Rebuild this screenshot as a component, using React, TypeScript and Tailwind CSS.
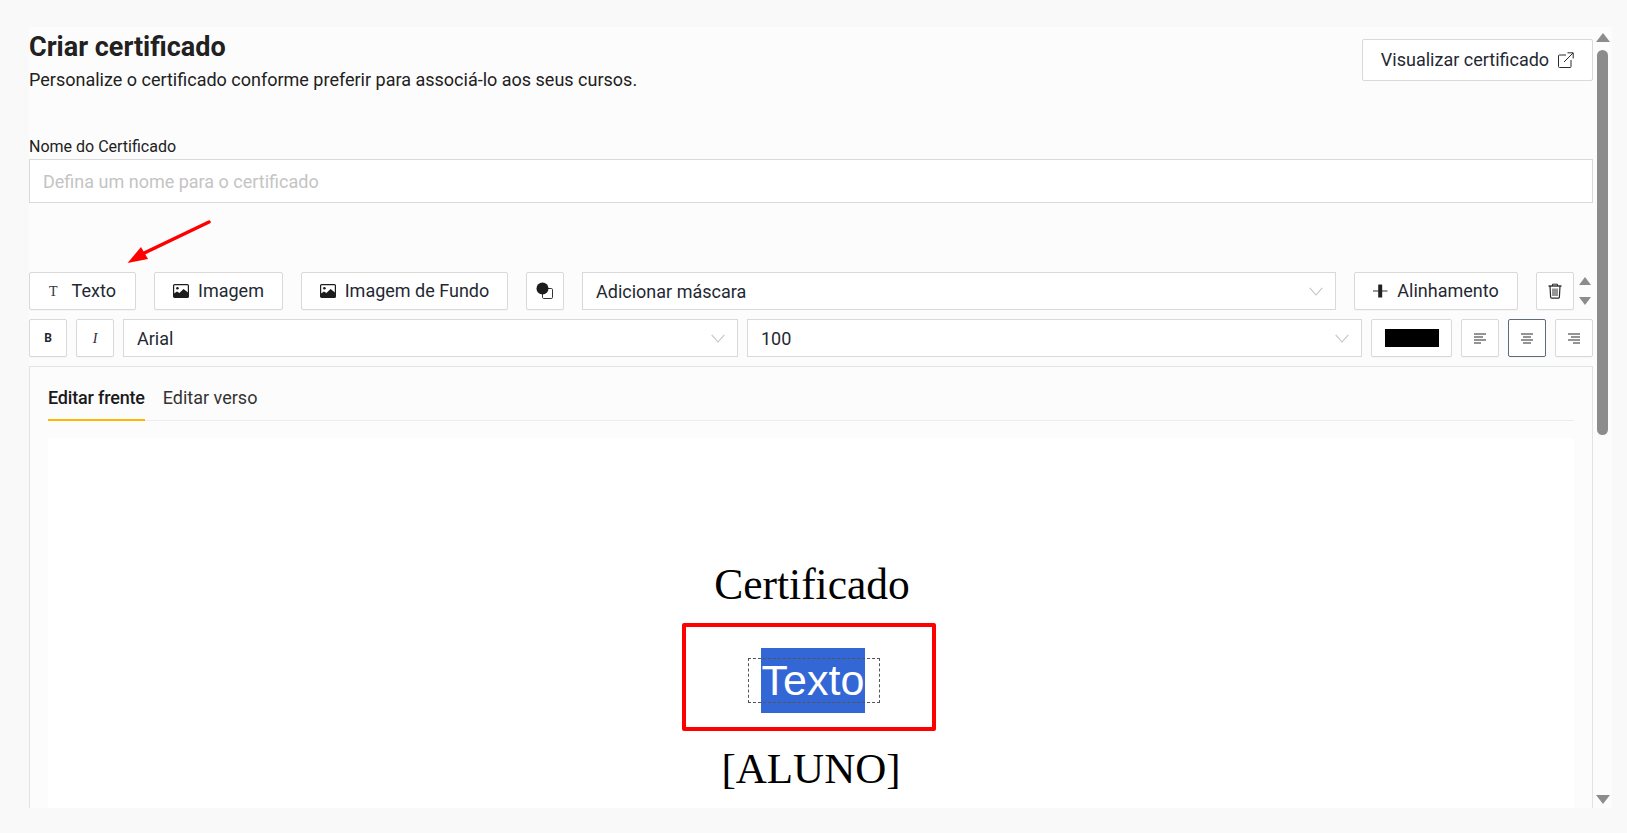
import React from 'react';

const ToolButton = ({ className = '', children }: { className?: string; children: React.ReactNode }) => (
  <button className={`flex h-[38px] items-center justify-center rounded-[2px] border border-[#d9d9d9] bg-white text-[18px] text-[#1f2933] shadow-[0_1px_1px_rgba(0,0,0,0.03)] ${className}`}>
    {children}
  </button>
);

const Chevron = () => (
  <svg width="14" height="9" viewBox="0 0 14 9" fill="none" className="shrink-0">
    <path d="M0.7 0.8 7 8 13.3 0.8" stroke="#c4c4c4" strokeWidth="1.1" />
  </svg>
);

const SelectBox = ({ value, className = '' }: { value: string; className?: string }) => (
  <div className={`flex h-[38px] items-center justify-between border border-[#d9d9d9] bg-white pl-[13px] pr-[12px] text-[18px] text-[#1f2933] ${className}`}>
    <span>{value}</span>
    <Chevron />
  </div>
);

const ImageIcon = () => (
  <svg width="16" height="14" viewBox="0 0 16 14" className="mt-[2px] shrink-0">
    <rect x="0.6" y="0.6" width="14.8" height="12.8" rx="1" fill="#fff" stroke="#1c1c1c" strokeWidth="1.2" />
    <circle cx="4.4" cy="4.2" r="1.3" fill="#1c1c1c" />
    <path d="M1 13 V9.6 L4 7.4 6.4 9 10.6 5 15 8.6 V13 Z" fill="#1c1c1c" />
  </svg>
);

const AlignIcon = ({ kind }: { kind: 'left' | 'center' | 'right' }) => {
  const lines = {
    left: [[0, 12], [0, 9], [0, 12], [0, 7]],
    center: [[0, 12], [2, 10], [0, 12], [2, 10]],
    right: [[0, 12], [3, 12], [0, 12], [5, 12]],
  }[kind];
  return (
    <svg width="12" height="11" viewBox="0 0 12 11" fill="none">
      {lines.map(([a, b], i) => (
        <path key={i} d={`M${a} ${1 + i * 3}H${b}`} stroke="#2b2b2b" strokeWidth="1" />
      ))}
    </svg>
  );
};

export default function App() {
  return (
    <div className="relative h-[833px] overflow-hidden bg-[#f9f9f9] pl-[29px] pt-[27px] font-['Roboto',sans-serif]">
      <div className="flex h-[781px] w-[1583px] bg-[#fcfcfc]">
        {/* Main column */}
        <div className="flex w-[1564px] shrink-0 flex-col">
          <div className="flex h-[112px] items-start justify-between">
            <div>
              <h1 className="mt-[4px] text-[27px] font-bold leading-[32px] text-[#212121]">Criar certificado</h1>
              <p className="mt-[5px] text-[18px] leading-[24px] text-[#212121]">
                Personalize o certificado conforme preferir para associá-lo aos seus cursos.
              </p>
            </div>
            <button className="mt-[12px] flex h-[42px] w-[231px] items-center justify-center gap-[9px] rounded-[2px] border border-[#d9d9d9] bg-white pb-[2px] text-[18px] text-[#1f2933]">
              Visualizar certificado
              <svg width="16" height="16" viewBox="0 0 16 16" fill="none" stroke="#2b2b2b" strokeWidth="1" className="mt-[2px]">
                <path d="M8 3H1.5a1 1 0 0 0-1 1v10.5a1 1 0 0 0 1 1H12a1 1 0 0 0 1-1V8" />
                <path d="M6 10 15 1M9.5 0.8H15.2V6.5" />
              </svg>
            </button>
          </div>

          <label className="h-[20px] text-[16px] leading-[16px] text-[#212121]">Nome do Certificado</label>
          <div className="flex h-[44px] items-center border border-[#d9d9d9] bg-white pl-[13px] pt-[1px] text-[18px] text-[#c4c4c4]">
            Defina um nome para o certificado
          </div>

          {/* Toolbar row 1 */}
          <div className="mt-[69px] flex h-[38px] items-center gap-[18px]">
            <ToolButton className="w-[107px] gap-[14px] pb-[2px]">
              <span className="mt-[2px] font-['Liberation_Serif',serif] text-[14px] text-[#333]">T</span>
              Texto
            </ToolButton>
            <ToolButton className="w-[129px] gap-[9px] pb-[2px]">
              <ImageIcon />
              Imagem
            </ToolButton>
            <ToolButton className="w-[207px] gap-[9px] pb-[2px]">
              <ImageIcon />
              Imagem de Fundo
            </ToolButton>
            <ToolButton className="w-[38px]">
              <svg width="18" height="18" viewBox="0 0 18 18" fill="none">
                <rect x="6.5" y="6.5" width="10" height="10" rx="1.2" stroke="#333" strokeWidth="1" />
                <circle cx="6.5" cy="6.5" r="6" fill="#1c1c1c" />
              </svg>
            </ToolButton>
            <SelectBox value="Adicionar máscara" className="flex-1" />
            <ToolButton className="w-[164px] gap-[9px] pb-[2px]">
              <svg width="15" height="14" viewBox="0 0 15 14" className="mt-[2px]">
                <path d="M0 7H14.5" stroke="#555" strokeWidth="1.2" />
                <rect x="5.2" y="0.5" width="4" height="13" rx="0.5" fill="#222" />
              </svg>
              Alinhamento
            </ToolButton>
            <div className="flex items-center">
              <ToolButton className="w-[38px]">
                <svg width="14" height="16" viewBox="0 0 14 16" fill="none" stroke="#2b2b2b" strokeWidth="1">
                  <path d="M0.5 3H13.5" strokeWidth="1.4" />
                  <path d="M4.5 3V1.2h5V3" />
                  <path d="M2 3l.6 11a1.2 1.2 0 0 0 1.2 1.2h6.4a1.2 1.2 0 0 0 1.2-1.2L12 3" strokeWidth="1.2" />
                  <path d="M5 5.5V13M7 5.5V13M9 5.5V13" />
                </svg>
              </ToolButton>
              <div className="ml-[3px] flex w-[16px] flex-col items-center gap-[12px]">
                <div className="h-0 w-0 border-x-[6px] border-b-[8px] border-x-transparent border-b-[#8c8c8c]" />
                <div className="h-0 w-0 border-x-[6px] border-t-[8px] border-x-transparent border-t-[#8c8c8c]" />
              </div>
            </div>
          </div>

          {/* Toolbar row 2 */}
          <div className="mt-[9px] flex h-[38px] items-center gap-[9px]">
            <ToolButton className="w-[38px] !text-[12px] font-bold">B</ToolButton>
            <ToolButton className="w-[38px] font-['Liberation_Serif',serif] !text-[14px] italic">I</ToolButton>
            <SelectBox value="Arial" className="w-[615px]" />
            <SelectBox value="100" className="w-[615px]" />
            <ToolButton className="w-[81px]">
              <span className="h-[18px] w-[54px] bg-black" />
            </ToolButton>
            <ToolButton className="w-[38px]"><AlignIcon kind="left" /></ToolButton>
            <ToolButton className="w-[38px] !border-[#5f6b7a]"><AlignIcon kind="center" /></ToolButton>
            <ToolButton className="w-[38px]"><AlignIcon kind="right" /></ToolButton>
          </div>

          {/* Editor */}
          <div className="mt-[9px] flex min-h-0 flex-1 flex-col border-x border-t border-[#e3e3e3] px-[18px]">
            <div className="mt-[16px] flex h-[38px] gap-[18px] border-b border-[#ececec] text-[18px]">
              <span className="h-[38px] border-b-2 border-[#ffb800] font-medium leading-[29px] tracking-[-0.01em] text-[#1a1a1a]">Editar frente</span>
              <span className="leading-[29px] text-[#333]">Editar verso</span>
            </div>
            <div className="relative mt-[17px] flex-1 bg-white">
              <div className="absolute left-[0] top-[121px] w-full pl-[2px] text-center font-['Liberation_Serif',serif] text-[43.5px] leading-[50px] text-black">
                Certificado
              </div>
              <div className="absolute left-[713px] top-[210px] h-[65px] w-[104px] bg-[#3367d6] text-center font-['Liberation_Sans',sans-serif] text-[43px] leading-[65px] text-white">
                Texto
              </div>
              <div className="absolute left-[700px] top-[220px] h-[45px] w-[132px] border border-dashed border-[#555]" />
              <div className="absolute left-[634px] top-[185px] h-[108px] w-[254px] rounded-[2px] border-[4px] border-[#ff0000]" />
              <div className="absolute left-[0] top-[306px] w-full text-center font-['Liberation_Serif',serif] text-[43px] leading-[50px] text-black">
                [ALUNO]
              </div>
            </div>
          </div>
        </div>

        {/* Scrollbar */}
        <div className="ml-[4px] flex w-[11px] flex-col items-center">
          <div className="mt-[6px] h-0 w-0 shrink-0 border-x-[7px] border-b-[9px] border-x-transparent border-b-[#8c8c8c]" />
          <div className="mt-[8px] h-[385px] w-[11px] rounded-full bg-[#8c8c8c]" />
          <div className="mt-auto mb-[4px] h-0 w-0 shrink-0 border-x-[7px] border-t-[9px] border-x-transparent border-t-[#8c8c8c]" />
        </div>
      </div>

      {/* Annotation arrow */}
      <svg className="absolute left-[120px] top-[215px]" width="100" height="55" viewBox="120 215 100 55">
        <path d="M209 222 L140 255" stroke="#ff0000" strokeWidth="3.5" strokeLinecap="round" />
        <path d="M127.5 263 L141 247 L148 259 Z" fill="#ff0000" />
      </svg>
    </div>
  );
}
